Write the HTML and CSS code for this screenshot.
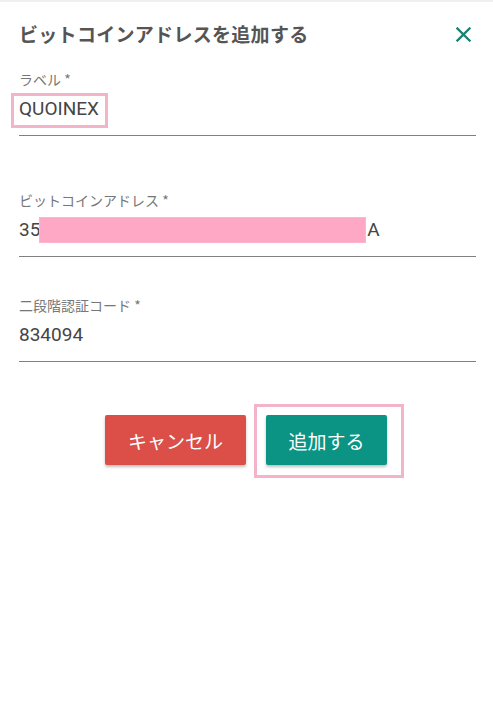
FILE: index.html
```html
<!DOCTYPE html>
<html lang="ja">
<head>
<meta charset="utf-8">
<link rel="stylesheet" href="styles.css">
</head>
<body>
<div class="dialog">
  <div class="header">
    <h1 class="title">ビットコインアドレスを追加する</h1>
    <button class="close" aria-label="閉じる">
      <svg width="15" height="15" viewBox="0 0 15 15"><path d="M1.5 1.5 L13.5 13.5 M13.5 1.5 L1.5 13.5" stroke="#1a8272" stroke-width="2.3" stroke-linecap="square" fill="none"/></svg>
    </button>
  </div>

  <div class="field field-1">
    <div class="label">ラベル *</div>
    <div class="value"><span class="boxed">QUOINEX</span></div>
  </div>

  <div class="field field-2">
    <div class="label">ビットコインアドレス *</div>
    <div class="value">35<span class="redact"></span>A</div>
  </div>

  <div class="field field-3">
    <div class="label">二段階認証コード *</div>
    <div class="value">834094</div>
  </div>

  <div class="actions">
    <button class="btn btn-cancel">キャンセル</button>
    <span class="framed"><button class="btn btn-add">追加する</button></span>
  </div>
</div>
</body>
</html>
```

FILE: styles.css
```css
html, body {
  margin: 0;
  padding: 0;
  background: #ffffff;
}
body {
  font-family: Roboto, "Noto Sans CJK JP", sans-serif;
  border-top: 2px solid #efefef;
  height: 704px;
}
.dialog {
  padding: 0 17px 0 19px;
}
.header {
  display: flex;
  align-items: center;
  justify-content: space-between;
  padding-top: 20px;
}
.title {
  margin: 0;
  font-family: "Noto Sans CJK JP", sans-serif;
  font-size: 19px;
  font-weight: 700;
  letter-spacing: 0.3px;
  line-height: 24px;
  color: #555555;
}
.close {
  border: 0;
  background: none;
  padding: 0;
  margin-right: 5px;
  width: 15px;
  height: 15px;
  display: flex;
}
.field {
  border-bottom: 1px solid #808080;
  padding-bottom: 14px;
}
.field-1 { margin-top: 23px; }
.field-2 { margin-top: 54px; }
.field-3 { margin-top: 38px; }
.label {
  font-family: "Noto Sans CJK JP", sans-serif;
  font-size: 14px;
  line-height: 20px;
  color: #777777;
}
.value {
  margin-top: 8px;
  font-family: Roboto, "Noto Sans CJK JP", sans-serif;
  font-size: 19px;
  line-height: 24px;
  color: #454545;
}
.boxed {
  position: relative;
}
.boxed::after {
  content: "";
  position: absolute;
  left: -8px;
  right: -9px;
  top: -4px;
  bottom: -8px;
  border: 3px solid #f3b4ca;
}
.redact {
  display: inline-block;
  width: 325px;
  height: 24px;
  vertical-align: top;
  background: #ffa8c6;
  outline: 1px solid #ffb3cc;
  margin-right: 2px;
}
.actions {
  display: flex;
  justify-content: center;
  gap: 20px;
  margin-top: 53px;
  padding-right: 3px;
}
.btn {
  border: 0;
  border-radius: 2px;
  height: 50px;
  font-family: "Noto Sans CJK JP", sans-serif;
  font-size: 19px;
  color: #ffffff;
  padding: 0;
  box-shadow: 0 2px 3px rgba(0, 0, 0, 0.25);
}
.btn-cancel {
  width: 141px;
  background: #db4f48;
}
.btn-add {
  width: 121px;
  background: #0b9484;
}
.framed {
  position: relative;
  display: flex;
}
.framed::after {
  content: "";
  position: absolute;
  left: -12px;
  right: -17px;
  top: -11px;
  bottom: -13px;
  border: 3px solid #f3b4ca;
}
```
